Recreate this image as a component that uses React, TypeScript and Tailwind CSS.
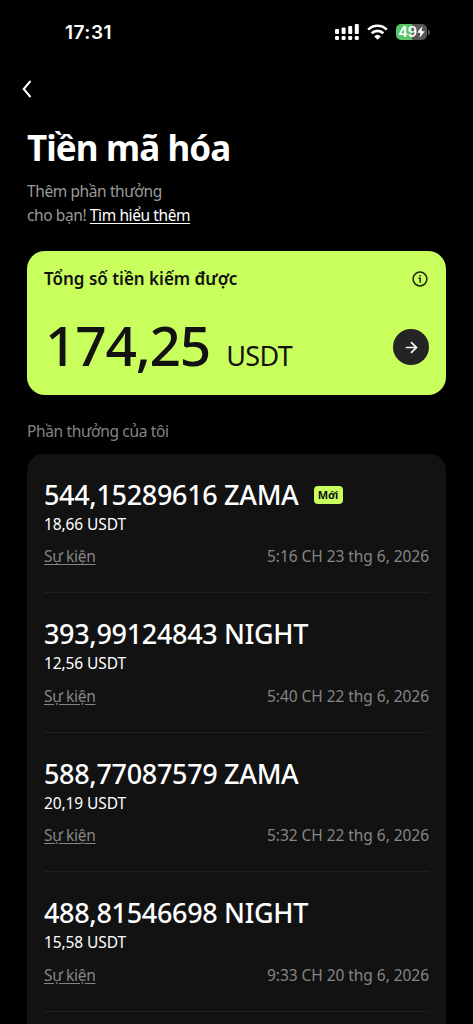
import { ArrowRight } from 'lucide-react';

interface Reward {
  amount: string;
  value: string;
  date: string;
  isNew?: boolean;
}

const rewards: Reward[] = [
  { amount: '544,15289616 ZAMA', value: '18,66 USDT', date: '5:16 CH 23 thg 6, 2026', isNew: true },
  { amount: '393,99124843 NIGHT', value: '12,56 USDT', date: '5:40 CH 22 thg 6, 2026' },
  { amount: '588,77087579 ZAMA', value: '20,19 USDT', date: '5:32 CH 22 thg 6, 2026' },
  { amount: '488,81546698 NIGHT', value: '15,58 USDT', date: '9:33 CH 20 thg 6, 2026' },
];

function SignalIcon() {
  const bars = [
    { x: 0, y: 5 },
    { x: 6.6, y: 3.6 },
    { x: 13.2, y: 2 },
    { x: 19.8, y: 0 },
  ];
  return (
    <svg width="24" height="17" viewBox="0 0 24 17" fill="white">
      {bars.map((b) => (
        <g key={b.x}>
          <rect x={b.x} y={b.y} width="4" height={10 - b.y} rx="1" />
          <rect x={b.x} y="12" width="4" height="4" rx="1.2" />
        </g>
      ))}
    </svg>
  );
}

function WifiIcon() {
  return (
    <svg width="21" height="16" viewBox="0 0 21 16" fill="none" stroke="white" strokeWidth="2.7">
      <path d="M1.2 5.6a13.2 13.2 0 0 1 18.6 0" />
      <path d="M4.7 9.3a8.2 8.2 0 0 1 11.6 0" />
      <path d="M10.5 15.8L7.2 12.4a4.8 4.8 0 0 1 6.6 0z" fill="white" stroke="none" />
    </svg>
  );
}

function Battery() {
  return (
    <div className="flex items-center gap-px">
      <div className="flex h-4 w-[31px] items-center justify-center rounded-[5px] bg-[linear-gradient(to_right,#5bc466_50%,#555558_50%)]">
        <span className="font-[Inter] text-[14.5px] leading-4 font-semibold tracking-[-0.2px]">49</span>
        <svg width="8" height="12" viewBox="0 0 7 11" fill="white">
          <path d="M4.8 0L0 6.2h3L2.1 11 7 4.7H4z" />
        </svg>
      </div>
      <div className="h-[5px] w-[2px] rounded-r-full bg-[#555558]" />
    </div>
  );
}

function StatusBar() {
  return (
    <div className="flex h-16 items-center justify-between pr-[43px] pl-[65px]">
      <span className="mt-px font-[Inter] text-[19px] leading-6 font-semibold tracking-[0.5px]">17:31</span>
      <div className="flex items-center gap-2">
        <SignalIcon />
        <WifiIcon />
        <Battery />
      </div>
    </div>
  );
}

function TotalCard() {
  return (
    <section className="mt-6 h-[144px] rounded-[18px] bg-[#c9ff5c] px-[17px] pt-4 text-[#121212]">
      <div className="flex h-6 items-center justify-between">
        <h2 className="text-[17px] font-semibold whitespace-nowrap">Tổng số tiền kiếm được</h2>
        <svg className="mr-px" width="16" height="16" viewBox="0 0 16 16" fill="none" stroke="#232b12" strokeWidth="1.5">
          <circle cx="8" cy="8" r="6.9" />
          <path d="M6.4 7.2h1.8v4.6M8 4.1v1.5" />
        </svg>
      </div>
      <div className="mt-6 flex h-16 items-center justify-between">
        <div className="-mt-[5px] flex items-baseline gap-4 pl-px">
          <span className="text-[55px] leading-16 font-medium tracking-[-1.2px]">174,25</span>
          <span className="text-[27px] tracking-[-0.6px]">USDT</span>
        </div>
        <button className="flex size-9 items-center justify-center rounded-full bg-[#242424]">
          <ArrowRight className="size-[17px] text-white" strokeWidth={2.4} />
        </button>
      </div>
    </section>
  );
}

function RewardRow({ reward }: { reward: Reward }) {
  return (
    <li className="h-[139.4px] border-b border-[#1f1f1f] pt-[25px]">
      <div className="flex h-8 items-center gap-[15px]">
        <span className="text-[27px] font-medium tracking-[-0.32px] whitespace-nowrap">{reward.amount}</span>
        {reward.isNew && (
          <span className="flex h-[18px] w-[29px] items-center justify-center rounded-[4px] bg-[#c9ff5c] text-[11px] font-bold tracking-[-0.3px] text-[#121212]">
            Mới
          </span>
        )}
      </div>
      <p className="mt-[3px] text-[15.5px] leading-5 tracking-[-0.1px]">{reward.value}</p>
      <div className="mt-[13px] flex h-5 items-center justify-between text-[15.5px] tracking-[-0.05px] text-[#858585]">
        <a className="tracking-[-0.3px] underline underline-offset-2">Sự kiện</a>
        <span>{reward.date}</span>
      </div>
    </li>
  );
}

export default function App() {
  return (
    <div className="h-[1024px] w-[473px] overflow-hidden bg-black font-['Noto_Sans',sans-serif] text-white">
      <StatusBar />
      <main className="px-[27px]">
        <button className="-ml-[5px] flex h-[50px] items-center">
          <svg width="10" height="18" viewBox="0 0 10 18" fill="none" stroke="white" strokeWidth="2">
            <path d="M8.5 1L1.7 9l6.8 8" />
          </svg>
        </button>
        <h1 className="mt-[11px] text-[35px] leading-[46px] font-bold tracking-[-0.9px] whitespace-nowrap">Tiền mã hóa</h1>
        <p className="mt-2 text-[15.5px] leading-6 tracking-[-0.4px] text-[#9a9a9a]">
          Thêm phần thưởng
          <br />
          cho bạn! <a className="text-white underline underline-offset-2">Tìm hiểu thêm</a>
        </p>
        <TotalCard />
        <h3 className="mt-6 text-[15.5px] leading-6 tracking-[-0.35px] text-[#858585]">Phần thưởng của tôi</h3>
        <ul className="mt-[11px] h-[600px] rounded-[16px] bg-[#121212] px-[17px]">
          {rewards.map((r) => (
            <RewardRow key={r.amount} reward={r} />
          ))}
        </ul>
      </main>
    </div>
  );
}
